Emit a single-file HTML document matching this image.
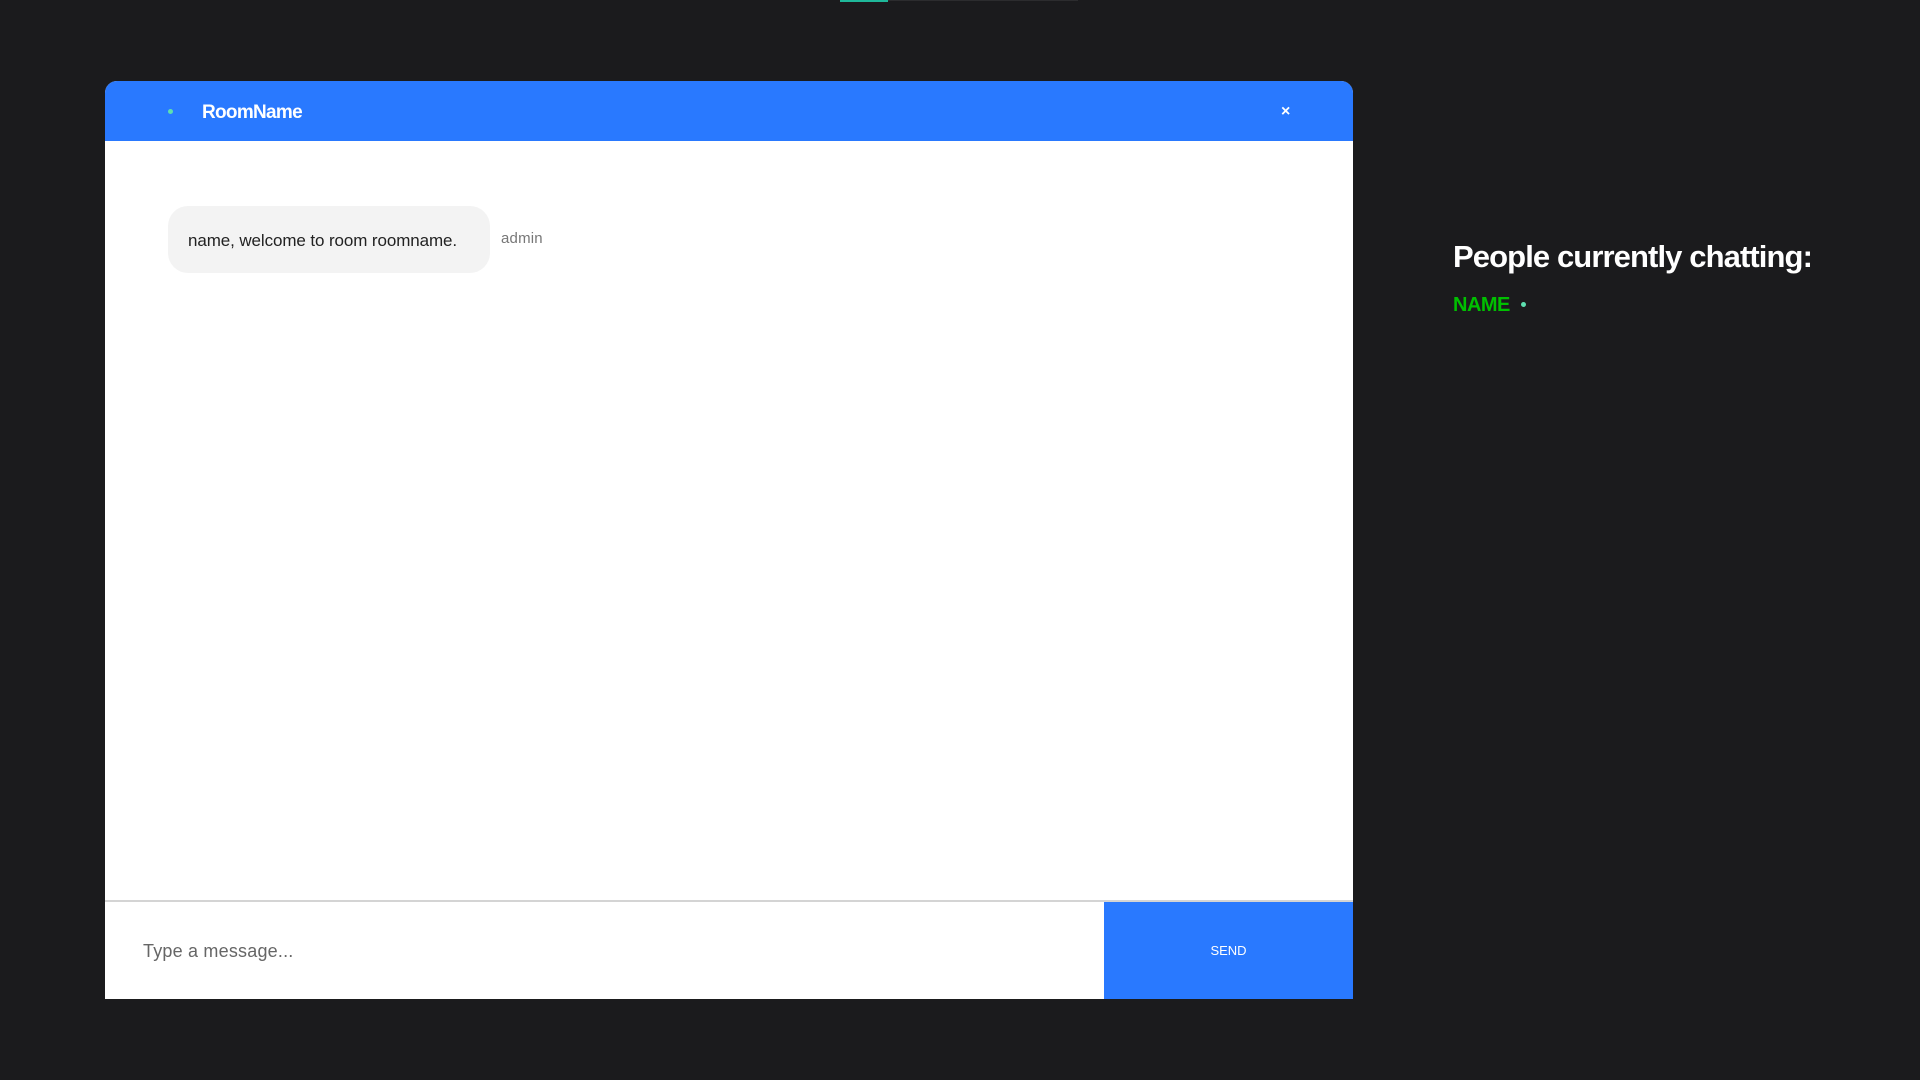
<!DOCTYPE html>
<html><head><meta charset="utf-8"><style>
*{margin:0;padding:0;box-sizing:border-box}
body{width:1920px;height:1080px;background:#1b1b1d;font-family:"Liberation Sans",sans-serif;position:relative;overflow:hidden}
.topa{position:absolute;left:840px;top:0;width:48px;height:2px;background:#1fb89a}
.topb{position:absolute;left:888px;top:0;width:190px;height:1px;background:#2c2c2e}
.card{position:absolute;left:105px;top:81px;width:1248px;height:918px;background:#fff;border-radius:12px 12px 0 0;overflow:hidden}
.hdr{height:60px;background:#2979ff;position:relative}
.card .dot{position:absolute;left:63px;top:28px;width:5px;height:5px;border-radius:50%;background:#5ee0b0}
.rn{position:absolute;left:97px;top:21px;color:#fff;font-weight:bold;font-size:19px;letter-spacing:-0.7px}
.x{position:absolute;left:1176px;top:22px;color:#fff;font-size:16px;font-weight:bold}
.bub{position:absolute;left:63px;top:125px;width:322px;height:67px;background:#f3f3f3;border-radius:20px;font-size:17px;color:#222;padding-left:20px;line-height:69px;letter-spacing:-0.1px}
.adm{position:absolute;left:396px;top:149px;font-size:15px;color:#777;letter-spacing:0.2px}
.line{position:absolute;left:0;top:819px;width:100%;height:2px;background:#d4d4d4}
.ph{position:absolute;left:38px;top:860px;font-size:18px;color:#666;letter-spacing:0.2px}
.send{position:absolute;left:999px;top:821px;width:249px;height:97px;background:#2979ff;color:#fff;font-size:13px;text-align:center;line-height:97px}
.t{position:absolute;left:1453px;top:239px;color:#fff;font-weight:bold;font-size:31px;letter-spacing:-0.9px}
.nm{position:absolute;left:1453px;top:294px;color:#00c000;font-weight:bold;font-size:20px;letter-spacing:-0.5px}
.d2{position:absolute;left:1521px;top:302px;width:5px;height:5px;border-radius:50%;background:#5ee0b0}
</style></head><body>
<div class="topa"></div><div class="topb"></div>
<div class="card">
<div class="hdr"><div class="dot"></div><div class="rn">RoomName</div><div class="x">×</div></div>
<div class="bub">name, welcome to room roomname.</div>
<div class="adm">admin</div>
<div class="line"></div>
<div class="ph">Type a message...</div>
<div class="send">SEND</div>
</div>
<div class="t">People currently chatting:</div>
<div class="nm">NAME</div><div class="d2"></div>
</body></html>
